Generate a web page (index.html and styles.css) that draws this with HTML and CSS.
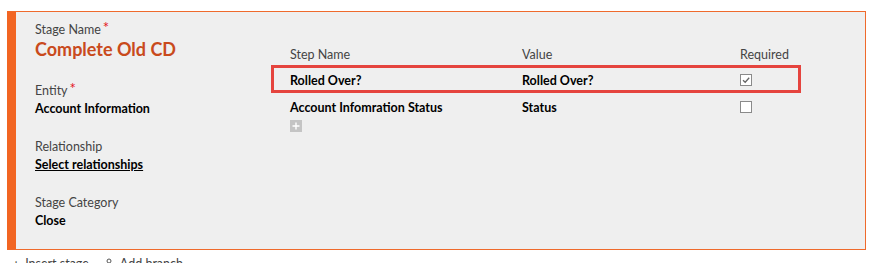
FILE: index.html
```html
<!DOCTYPE html>
<html>
<head>
<meta charset="utf-8">
<link rel="stylesheet" href="styles.css">
</head>
<body>
<div class="stage">
  <div class="side">
    <div class="field first">
      <div class="label">Stage Name<span class="req">*</span></div>
      <div class="title">Complete Old CD</div>
    </div>
    <div class="field">
      <div class="label">Entity<span class="req">*</span></div>
      <div class="value">Account Information</div>
    </div>
    <div class="field">
      <div class="label">Relationship</div>
      <div class="value link">Select relationships</div>
    </div>
    <div class="field">
      <div class="label">Stage Category</div>
      <div class="value">Close</div>
    </div>
  </div>
  <div class="steps">
    <div class="row head">
      <div>Step Name</div>
      <div>Value</div>
      <div>Required</div>
    </div>
    <div class="row item selected">
      <div>Rolled Over?</div>
      <div>Rolled Over?</div>
      <div><span class="check on"><svg viewBox="0 0 10 10" width="10" height="10"><path d="M2 5.2 L4.2 7.3 L8.2 2.8" fill="none" stroke="#666" stroke-width="1.3"/></svg></span></div>
    </div>
    <div class="row item second">
      <div>Account Infomration Status</div>
      <div>Status</div>
      <div><span class="check"></span></div>
    </div>
    <div class="add"><span class="plus"><svg viewBox="0 0 12 12" width="12" height="12"><path d="M6 2.5 V9.5 M2.5 6 H9.5" stroke="#fff" stroke-width="1.4"/></svg></span></div>
  </div>
</div>
<div class="actions">
  <span class="act"><span class="ico">+</span>Insert stage</span>
  <span class="act"><svg class="branch" viewBox="0 0 12 12" width="12" height="12"><circle cx="6" cy="3" r="2" fill="none" stroke="#555" stroke-width="1"/><path d="M6 5 V6.5 M6 6.5 L2.5 11 M6 6.5 L9.5 11" fill="none" stroke="#555" stroke-width="1"/></svg>Add branch</span>
</div>
</body>
</html>
```
FILE: styles.css
```css
html, body {
  margin: 0;
  padding: 0;
  background: #ffffff;
  font-family: "Segoe UI", "Lato", "Open Sans", sans-serif;
  color: #000;
}
body {
  padding: 11px 0 0 7px;
  width: 873px;
  height: 263px;
  overflow: hidden;
  box-sizing: border-box;
}
.stage {
  display: flex;
  width: 859px;
  height: 239px;
  box-sizing: border-box;
  background: #efefef;
  border: 1px solid #ef6a2c;
  border-left: 9px solid #f26522;
}
.side {
  width: 255px;
  padding: 10px 0 0 19px;
  box-sizing: border-box;
  display: flex;
  flex-direction: column;
  gap: 20px;
}
.field {
  display: flex;
  flex-direction: column;
}
.field.first {
  margin-bottom: 3px;
}
.label {
  font-size: 12.5px;
  color: #444;
  line-height: 16px;
}
.req {
  color: #e4141b;
  font-size: 15px;
  line-height: 0;
  margin-left: 2px;
  position: relative;
  top: -1px;
}
.title {
  font-size: 18px;
  font-weight: 700;
  color: #c94a1c;
  line-height: 22px;
}
.value {
  font-size: 12.5px;
  font-weight: 700;
  line-height: 20px;
}
.link {
  text-decoration: underline;
}
.steps {
  padding-top: 31px;
  display: flex;
  flex-direction: column;
}
.row {
  display: grid;
  grid-template-columns: 232px 218px 60px;
  width: 530px;
  box-sizing: border-box;
  padding-left: 19px;
  align-items: center;
}
.head {
  font-size: 12.5px;
  color: #444;
  height: 22px;
}
.item {
  font-size: 12.5px;
  font-weight: 700;
  height: 28px;
  border: 3px solid transparent;
  padding-left: 16px;
  padding-top: 2px;
}
.item.second {
  height: 26px;
}
.selected {
  border-color: #e5443e;
}
.check {
  display: flex;
  align-items: center;
  justify-content: center;
  width: 12px;
  height: 12px;
  box-sizing: border-box;
  border: 1px solid #8a8a8a;
  background: #fff;
}
.add {
  padding-left: 19px;
  padding-top: 1px;
}
.plus {
  display: flex;
  width: 12px;
  height: 12px;
  background: #c4c4c4;
}
.actions {
  display: flex;
  gap: 14px;
  padding: 5px 0 0 5px;
  font-size: 12.5px;
  color: #444;
}
.act {
  display: flex;
  align-items: center;
  gap: 5px;
}
.ico {
  font-size: 14px;
}
```
